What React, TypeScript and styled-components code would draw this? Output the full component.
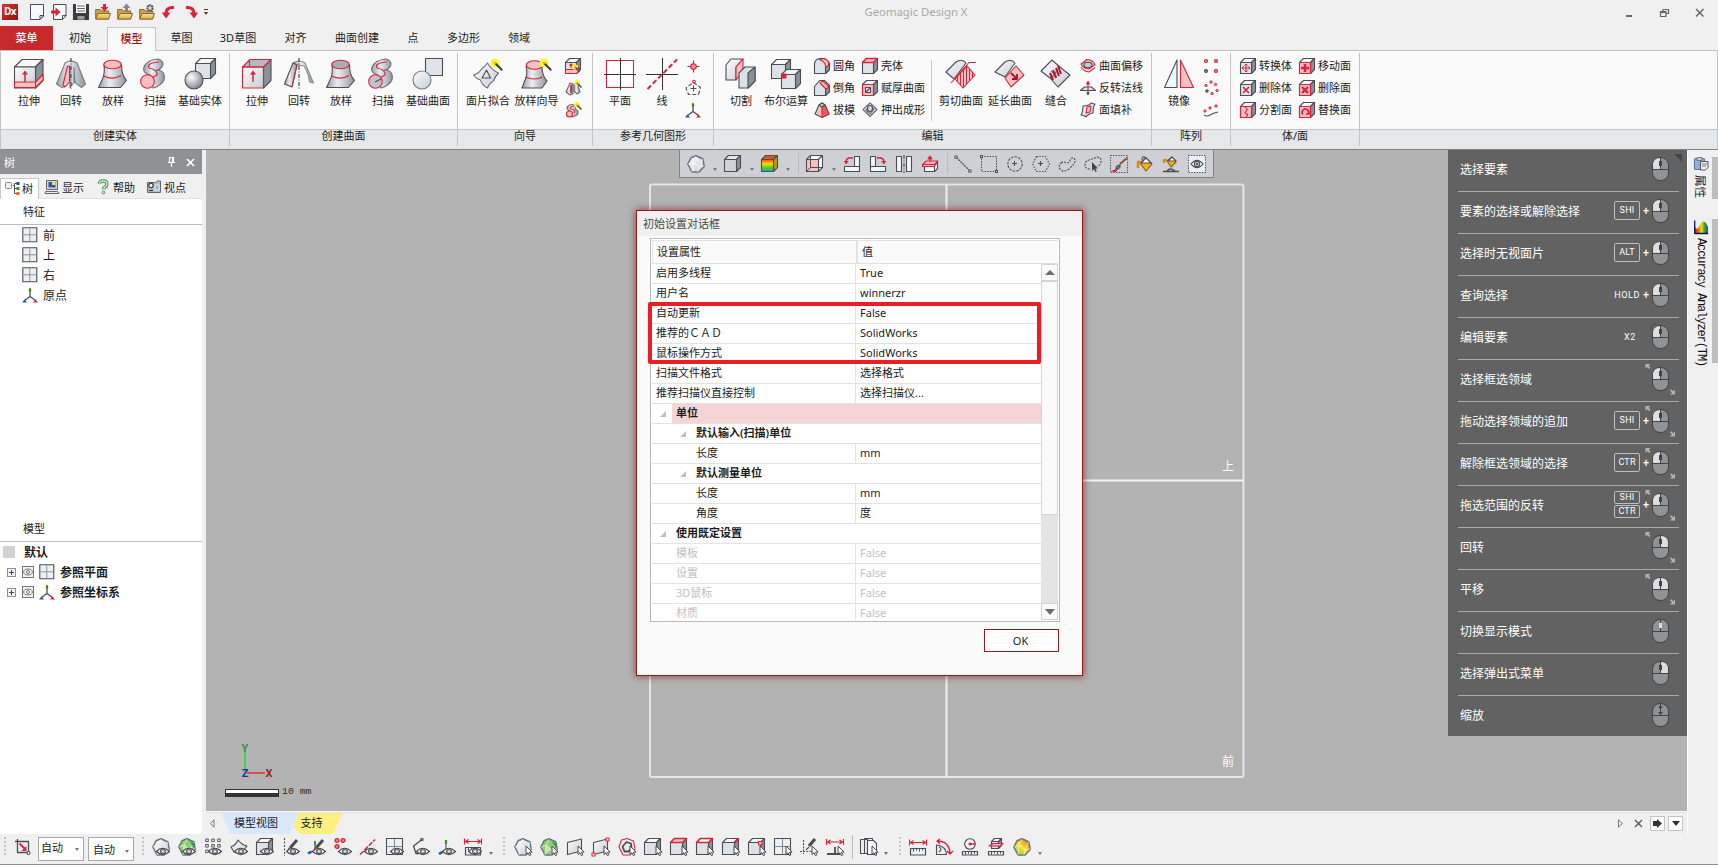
import React from 'react';
import styled, { createGlobalStyle, css } from 'styled-components';

const FONT = '"Noto Sans", "Noto Sans CJK SC", sans-serif';
const RED = '#d9223c';
const DARK = '#4b4e54';
const PINK = '#f8c0c0';

const Global = createGlobalStyle`
  * { box-sizing: border-box; }
  body { margin: 0; font-family: ${FONT}; font-size: 11px; color: #1c1c1c; background: #f0f0f0; overflow: hidden; }
  svg { display: block; flex: none; overflow: visible; }
`;

/* ---------- icons ---------- */

type IconProps = { size: number; children: React.ReactNode };
const Icon = ({ size, children }: IconProps) => (
  <svg width={size} height={size} viewBox={`0 0 ${size} ${size}`} fill="none" stroke={DARK} strokeWidth="1.1" strokeLinejoin="round">
    {children}
  </svg>
);

const HiddenDefs = styled.svg`position: absolute;`;
const Gradients = () => (
  <HiddenDefs width="0" height="0">
    <defs>
      <linearGradient id="metal" x1="0" x2="1"><stop offset="0" stopColor="#9a9da3" /><stop offset=".4" stopColor="#eceef2" /><stop offset="1" stopColor="#8f9399" /></linearGradient>
      <linearGradient id="pale" x1="0" y1="0" x2="1" y2="1"><stop offset="0" stopColor="#fdfdfe" /><stop offset="1" stopColor="#c6ccd4" /></linearGradient>
      <radialGradient id="ball" cx=".35" cy=".35" r=".7"><stop offset="0" stopColor="#fff" /><stop offset="1" stopColor="#7f858e" /></radialGradient>
      <linearGradient id="heat" x1="0" y1="0" x2="0" y2="1"><stop offset="0" stopColor="#f0421c" /><stop offset=".35" stopColor="#f8e000" /><stop offset=".7" stopColor="#58c81c" /><stop offset="1" stopColor="#18a8c8" /></linearGradient>
      <linearGradient id="heatAcross" x1="0" y1="1" x2="1" y2="0"><stop offset="0" stopColor="#8ed040" /><stop offset=".5" stopColor="#f4e028" /><stop offset="1" stopColor="#f05828" /></linearGradient>
      <linearGradient id="folder" x1="0" y1="0" x2="0" y2="1"><stop offset="0" stopColor="#f4e0a0" /><stop offset="1" stopColor="#d8b050" /></linearGradient>
      <linearGradient id="spectrum" x1="0" x2="1"><stop offset="0" stopColor="#c01818" /><stop offset=".3" stopColor="#f07810" /><stop offset=".5" stopColor="#f0d810" /><stop offset=".75" stopColor="#38a828" /><stop offset="1" stopColor="#1848b0" /></linearGradient>
      <pattern id="hatch" width="3" height="4" patternUnits="userSpaceOnUse"><rect width="3" height="4" fill="#f8c0c0" /><rect width="1" height="4" fill={RED} /></pattern>
    </defs>
  </HiddenDefs>
);

type BoxProps = { x?: number; y?: number; w: number; d: number; front?: string; top?: string; side?: string; stroke?: string };
/* Shaded block: square front of side w with a top and right face of depth d. */
const Block = ({ x = 0.5, y = 0.5, w, d, front = '#dde1e8', top = '#f6f8fa', side = '#8b9198', stroke = DARK }: BoxProps) => (
  <g stroke={stroke}>
    <path d={`M${x} ${y + d}l${d} ${-d}h${w}l${-d} ${d}z`} fill={top} />
    <path d={`M${x + w} ${y + d}l${d} ${-d}v${w}l${-d} ${d}z`} fill={side} />
    <path d={`M${x} ${y + d}h${w}v${w}h${-w}z`} fill={front} />
  </g>
);

const Wand = ({ x, y, r = 4.5 }: { x: number; y: number; r?: number }) => (
  <g stroke="none">
    <circle cx={x} cy={y} r={r} fill="#fbf23a" />
    <path d={`M${x} ${y}l${r * 1.6} ${r * 1.6}`} stroke="#3a3a3a" strokeWidth={r * 0.45} />
    <circle cx={x} cy={y} r={r * 0.3} fill="#e0b810" />
  </g>
);

const UpArrow = () => <><path d="M12 24v-8" stroke={RED} strokeWidth="1.500" /><path d="M9 16.500l3-4 3 4z" fill={RED} stroke="none" /></>;

const big: Record<string, React.ReactNode> = {
  extrude: <><Block x={1.5} y={1.5} w={21} d={7.5} front="url(#pale)" /><path d="M1.500 24h21l7.500-7.500v5.500l-7.500 7.500h-21z" fill={PINK} stroke={RED} /><path d="M22.500 24v5" stroke={RED} /><UpArrow /></>,
  extrudeS: <><path d="M1.500 9h21v21h-21z" fill="url(#pale)" stroke="none" /><path d="M22.500 9l7.500-7.500v21l-7.500 7.500z" fill="#8b9198" /><path d="M1.500 9l7.500-7.500h21l-7.500 7.500zM8.500 2v7" fill="#b5bac1" stroke={RED} /><path d="M1.500 9h21v21h-21z" stroke={RED} /><UpArrow /></>,
  revolve: <><path d="M1.500 26l8.500-21q6-4 12 0l8.500 21-4 3.500-6.500-5-1-15v15l-4 5v-20l-5 19-3 1z" fill="url(#metal)" stroke="#7b7f85" /><path d="M8 27l4.500-19h2v16l-4.500 5z" fill={PINK} stroke={RED} /><path d="M16 0v32" strokeDasharray="4 1.500 1 1.500" stroke="#303236" /></>,
  revolveS: <><path d="M10 5q6-4 12 0l8.500 20-4-1q-1-9-5.500-16l-6-1z" fill="url(#metal)" stroke="#8a8e94" /><path d="M1.500 26l8.500-21 4 2-5 22z" fill="url(#metal)" /><path d="M14 7l-5 22" stroke={RED} /><path d="M16 0v32" strokeDasharray="4 1.500 1 1.500" stroke="#303236" /></>,
  loft: <><path d="M7 6q1 10-1.500 15l-4 8.500h22l6-7q-5-5-5-16z" fill="url(#metal)" /><ellipse cx="15.500" cy="6.500" rx="8.700" ry="4.300" fill={PINK} stroke={RED} /><path d="M6.500 18q9 4.500 17.500-.5" stroke={RED} /></>,
  loftS: <><path d="M7 6q1 10-1.500 15l-4 8.500h22l6-7q-5-5-5-16z" fill="url(#metal)" /><ellipse cx="15.500" cy="6.500" rx="8.700" ry="4.300" fill="#a9aeb6" stroke={RED} /><path d="M6.500 18q9 4.500 17.500-.5" stroke={RED} /></>,
  sweep: <><path d="M11 17q-8-2-6-8 3-7 14-8 8 3 3 9-3 3-5 2 10 0 8 10-3 6-11 8z" fill="url(#metal)" stroke="#6a6e75" /><path d="M20 4q-13 1-10 6 9 2 8 7l-8 5" stroke={RED} /><circle cx="8.500" cy="23.500" r="6.800" fill={PINK} stroke={RED} /></>,
  sweepS: <><path d="M11 17q-8-2-6-8 3-7 14-8 8 3 3 9-3 3-5 2 10 0 8 10-3 6-11 8z" fill="url(#metal)" stroke="#6a6e75" /><path d="M20 4q-13 1-10 6 9 2 8 7l-8 5" stroke={RED} /><circle cx="8.500" cy="23.500" r="6.800" fill="#bfc4cb" stroke={RED} /><path d="M8 24l6-3" /></>,
  solids: <><Block x={11.5} y={0.5} w={15} d={5} /><circle cx="10" cy="22" r="9" fill="url(#ball)" /></>,
  surfaces: <><rect x="13.500" y=".500" width="17" height="17" fill="#dfe3ea" /><circle cx="10" cy="22" r="9" fill="url(#pale)" stroke="#777b82" /></>,
  meshFit: <><path d="M1.500 17q5-1 8-6 3-2 6-6 4 7 11 10-4 4-5 8-4 2-6 7-6-3-7-8-4-1-7-5z" fill="url(#pale)" stroke="#6a6e75" /><path d="M10 20l4.500-8 4 8z" /><Wand x={23} y={5} /></>,
  loftWiz: <><path d="M5 8q2 9-1 14l-3 8h20l5-7q-5-5-5-15z" fill="url(#metal)" /><ellipse cx="13.500" cy="7" rx="8.200" ry="4.300" fill={PINK} stroke={RED} /><path d="M4.500 19q9 4 17 0" stroke={RED} /><Wand x={23} y={5} /></>,
  plane: <><rect x="2.500" y="2.500" width="27" height="27" fill="#fff" stroke={RED} /><path d="M0 16.500h32M16.500 0v32" stroke="#303236" strokeWidth="1" /></>,
  line: <><path d="M0 16.500h32M16.500 0v32" stroke="#303236" strokeWidth="1" /><path d="M1.500 31L31 1.500" stroke={RED} strokeWidth="2" strokeDasharray="5 2.500" /></>,
  cut: <><path d="M1 7l5-6h12l-7 8v13H1z" fill="url(#pale)" /><path d="M11 9l7-8v12l-7 9z" fill={PINK} stroke={RED} /><path d="M14 15l6-6h10v14l-7 7h-9z" fill="#dde1e8" /><path d="M23 15l7-6v14l-7 7z" fill="#8b9198" /></>,
  boolean: <><Block x={1.500} y={1.500} w={14} d={5} /><Block x={11.500} y={11.500} w={14} d={5} /><rect x="11.500" y="15.500" width="5" height="5" fill={RED} stroke="none" /></>,
  trim: <><path d="M1 14L11 4q6-4 10 1l-12 16z" fill="url(#pale)" /><path d="M10 21q7-8 12-13l8 9-12 13z" fill="url(#hatch)" stroke={RED} /><path d="M6 25L24 4.500h7" stroke={RED} /></>,
  extend: <><path d="M1 14L11 4q6-4 10 1l-10 14z" fill="url(#pale)" /><path d="M11 20l11-12 8 9-13 12z" fill={PINK} stroke={RED} /><path d="M17 15l6 6m0-5v5h-5" stroke="#b3102a" strokeWidth="1.800" /></>,
  sew: <><path d="M1 13L12 2l9 8 9 7-12 12-8-9z" fill="url(#pale)" /><path d="M9 20q6-1 8-9M11 13l6 6" stroke="#777" /><path d="M10 15l3 7m0-10l3 8m0-10l3 8m-1-10l3 8" stroke="#b3102a" strokeWidth="2" /></>,
  mirror: <><path d="M14 2v27.500H1.500z" fill="#f0f7fb" /><path d="M17.500 2v27.500H30.500z" fill={PINK} stroke={RED} /></>,
};

const pinkBox = <><Block w={11} d={4} front={PINK} /><path d="M.500 4.500h11v11h-11z" stroke={RED} /></>;

const small: Record<string, React.ReactNode> = {
  boxWiz: <><Block w={11} d={4} /><path d="M.500 11.500h11l3-2v3l-3 3h-11z" fill={PINK} stroke={RED} /><path d="M6 10V6M4.500 7.500L6 6l1.500 1.500" stroke={RED} /><Wand x={10} y={9} r={2.800} /></>,
  revWiz: <><path d="M1 12l4-9 3 1v10l-3 1z" fill="url(#metal)" stroke="#6a6e75" /><path d="M9 4l3-1 3 9-3 2-3-3z" fill="url(#metal)" stroke="#6a6e75" /><path d="M6 13V5" stroke={RED} strokeWidth="1.700" /><Wand x={12} y={3} r={2.800} /></>,
  sweepWiz: <><path d="M5 9q-5-2-2-5t8 0l-1 3q5 2 2 6l-5 2z" fill="url(#metal)" stroke="#6a6e75" /><path d="M9 4q-5 1-3 3 5 1 3 4" stroke={RED} /><circle cx="4.500" cy="12" r="3" fill={PINK} stroke={RED} /><Wand x={12} y={3} r={2.800} /></>,
  point: <><path d="M8.500 2.500v12M2.500 8.500h12" stroke={DARK} /><circle cx="8.500" cy="8.500" r="2.800" fill="#f08a90" stroke={RED} /></>,
  polygon: <><path d="M8.500 2.500l7 5-2 7h-10L1 8z" strokeDasharray="4 2" /><path d="M5.500 8.500h6M8.500 5.500v6" strokeWidth="1" /><circle cx="9" cy="1.500" r="1.300" stroke={RED} /></>,
  axes: <><path d="M8 9.500V4M8 9.500l-5.500 4M8 9.500l5.500 4" strokeWidth="1.300" /><path d="M6.800 4.500V2L8 .500 9.200 2v2.500z" fill="#3a8a10" stroke="none" /><path d="M0 15.500l2.500-3 2.500 3z" fill="#1c58b8" stroke="none" /><path d="M16 15.500l-2.500-3-2.500 3z" fill={RED} stroke="none" /></>,
  fillet: <><path d="M.500 6.500q0-5 5-6h5l5 5v6l-4 4h-11z" fill="#dde1e8" /><path d="M11.500 9.500l4-4v6l-4 4z" fill="#8b9198" /><path d="M5.500 1.500q5-2 8 1 2 2 1 5l-3 2q1-5-6-8z" fill={PINK} stroke={RED} /></>,
  chamfer: <><path d="M.500 6.500l5-6h5l5 5v6l-4 4h-11z" fill="#dde1e8" /><path d="M11.500 9.500l4-4v6l-4 4z" fill="#8b9198" /><path d="M6 3l3-2 6 6-3 2z" fill={PINK} stroke={RED} /></>,
  draft: <><path d="M5 3l3-2 3 2 4 9-7 3.500L1 12z" fill={PINK} /><path d="M8 5l3-2 4 9-7 3.500z" fill="#d86068" stroke={RED} /><path d="M5 3l3-2 3 2-3 2z" fill="#ccd0d6" /></>,
  shell: <><Block w={11} d={4} /><path d="M.500 4.500l4-4h11l-4 4z" fill={PINK} stroke={RED} strokeWidth="1.400" /></>,
  thicken: <>{pinkBox}<rect x="3.500" y="7.500" width="5" height="5" fill="#dde1e8" /><path d="M4 12l4-4" /></>,
  emboss: <><path d="M8 1l7 6.500-7 7-7-7z" fill="url(#pale)" stroke="#6a6e75" /><path d="M8 4l4 3-4 5-4-4z" stroke="#6a6e75" /><ellipse cx="8" cy="6.500" rx="2.500" ry="3" fill="#d8dce2" /></>,
  offset: <><path d="M1 6l6-4.500q6 .5 8 5l-6 4.500q-5 0-8-5z" fill={PINK} stroke={RED} /><ellipse cx="8" cy="7" rx="4" ry="2.700" fill="#c8ccd2" /><path d="M1 9q3 4.500 8 5l6-4.500" stroke={RED} /></>,
  flip: <><path d="M.500 10.500l4-3.500h7l4 3.500z" fill="#dde1e8" /><path d="M8 14V9" /><path d="M6 12.500l2 3 2-3z" fill={DARK} stroke="none" /><path d="M8 9V2M6.500 4L8 1.500 9.500 4z" stroke={RED} fill={RED} /></>,
  fill: <><path d="M1 13q2-3 2-9 6 0 8-3 2 1 4 1-2 3-2 9-5 1-7 4-2-2-5-2z" fill="url(#pale)" /><path d="M6 11l1-6 4-1-1 6z" fill={PINK} stroke={RED} /></>,
  grid4: <>{[[3, 3], [13, 3], [13, 13]].map(([x, y]) => <circle key={`${x}${y}`} cx={x} cy={y} r="1.500" fill="#f08a90" stroke={RED} />)}<circle cx="3" cy="13" r="1.500" fill="#888" /></>,
  ring: <>{[[8, 2], [12.500, 4.500], [3, 5.500], [14, 10.500], [9, 13.500]].map(([x, y]) => <circle key={`${x}-${y}`} cx={x} cy={y} r="1.200" fill="#f08a90" stroke={RED} strokeWidth=".9" />)}<circle cx="4" cy="11" r="1.200" fill="#777" /></>,
  curvePts: <><path d="M1 13q3 2 6 0t8-3" />{[[2, 9], [7, 6], [13, 4]].map(([x, y]) => <circle key={x} cx={x} cy={y} r="1.200" fill="#f08a90" stroke={RED} strokeWidth=".9" />)}</>,
  transBody: <><Block w={11} d={4} /><path d="M6 6v8M2 10h8M4.500 7.500L6 6l1.500 1.500M4.500 12.500L6 14l1.500-1.500M3.500 8.500L2 10l1.500 1.500M8.500 8.500L10 10l-1.500 1.500" stroke={RED} strokeWidth="1" /></>,
  delBody: <><Block w={11} d={4} /><path d="M3 7l6 6m0-6l-6 6" stroke={RED} strokeWidth="1.500" /></>,
  splitFace: <>{pinkBox}<path d="M5 4.500l2.500 3-2.500 3 2.500 2-1 3" stroke={RED} /></>,
  moveFace: <>{pinkBox}<path d="M6 6v8M2 10h8" stroke={RED} strokeWidth="2.600" /></>,
  delFace: <>{pinkBox}<path d="M3 7l6 6m0-6l-6 6" stroke={RED} strokeWidth="2.400" /></>,
  replFace: <>{pinkBox}<path d="M4 12.500a3.200 3.200 0 1 1 5-.5m-2 0h3v-3" stroke={RED} strokeWidth="1.600" /></>,
  blank: <><path d="M1.500.500h13v11.500l-3.500 3.500h-9.500z" fill="#f7f9fa" strokeWidth="1" /><path d="M11 15.500v-4h3.500z" fill="#fff" strokeWidth="1" /></>,
  importDoc: <><path d="M2.500.500h12.500v11.500l-3.500 3.500h-9z" fill="#f7f9fa" strokeWidth="1" /><path d="M11.500 15.500v-4H15z" fill="#fff" strokeWidth="1" /><path d="M0 6.500h4.500V3.500L9.500 8l-5 4.500V9.500H0z" fill={RED} stroke="none" /></>,
  save: <><path d="M.500.500h15v15h-15z" fill="#3a3c40" stroke="#3a3c40" /><path d="M3 0h10v9H3z" fill="#fff" stroke="none" /><path d="M4 2h8M4 4.500h8M4 7h8" stroke="#555" strokeWidth=".9" /><path d="M4.500 12h7v3.500h-7z" fill="#999da3" stroke="none" /></>,
  undo: <><path d="M13 3.500q-8-1-8 7" stroke={RED} strokeWidth="3" /><path d="M.800 8.500h8.700L5 14.500z" fill={RED} stroke="none" /></>,
  redo: <><path d="M3 3.500q8-1 8 7" stroke={RED} strokeWidth="3" /><path d="M15.200 8.500H6.500l4.500 6z" fill={RED} stroke="none" /></>,
  frame: <><rect x=".8" y=".8" width="14" height="14" fill="#eeeff1" strokeWidth="1.100" /><path d="M7.800 1.400v13M1.400 7.800h13" stroke="#8a98a0" strokeWidth="1" /></>,
  tree: <><rect x=".500" y="1.500" width="6" height="6" rx="1" fill="#f1f1f1" stroke="#888" strokeWidth="1" /><path d="M8 4.500h2M12 2.500H9.500v10H12M9.500 7.500H12" stroke="#555" strokeWidth="1" /><rect x="11.500" y="1" width="3" height="3" fill="#1c4fa0" stroke="none" /><rect x="11.500" y="6" width="3" height="3" fill="#3a9a10" stroke="none" /><rect x="11.500" y="11" width="3" height="3" fill="#e06a10" stroke="none" /></>,
  monitor: <><rect x="2.500" y="1.500" width="11" height="9" fill="#d6d6d0" stroke="#666" strokeWidth="1" /><rect x="4.500" y="3" width="7" height="5.500" fill="#2a5aa0" stroke="none" /><path d="M8 3h3.500v3H8z" fill="#e8d890" stroke="none" /><path d="M1.500 12.500h12l1.500 2H1z" fill="#eee" strokeWidth="1" stroke="#666" /></>,
  question: <><path d="M4.500 5q0-3 3.700-3t3.700 3q0 2-2.200 3.200Q8.500 9 8.500 10.500" stroke="#4f9458" strokeWidth="3.400" /><path d="M4.500 5q0-3 3.700-3t3.700 3q0 2-2.200 3.200Q8.500 9 8.500 10.500" stroke="#cfe8cf" strokeWidth="1.400" /><circle cx="8.500" cy="13.500" r="1.400" fill="#cfe8cf" stroke="#4f9458" strokeWidth="1" /></>,
  camera: <><path d="M1.500 3.500h8L11.500 2h3v11.500h-13z" fill="#b9bcbf" stroke="#666" strokeWidth="1" /><circle cx="5" cy="6.500" r="2.200" fill="#eee" stroke="#333" /><rect x="9" y="6" width="4" height="5" fill="#8ab0d8" stroke="#fff" strokeWidth=".8" /><path d="M3 11.500h4" stroke="#333" /></>,
  props: <><rect x=".500" y="1.500" width="10" height="11" rx="1" fill="#8fb2dc" stroke="#5878a8" /><rect x="3" y=".500" width="5" height="3" fill="#c8ccd0" stroke="#666" strokeWidth=".8" /><path d="M6.500 4.500h7.500v6l-2.500 2.500h-5z" fill="#f0f0ea" stroke="#555" strokeWidth="1" /><path d="M8 7h5M8 9h4" stroke="#666" strokeWidth=".8" /></>,
  spectrum: <><path d="M1 13V7l2 2 2-2 2-4q3-3 5 0l2 4v6z" fill="url(#spectrum)" stroke="none" /><path d="M.700.500v13h13.500" stroke="#101850" strokeWidth="1.300" /></>,
};

const folderOf = (extra: React.ReactNode) => <><path d="M.700 15V5.500h4.500l1.500 1.500h7v8z" fill="#caa24a" stroke="#8a6a20" strokeWidth="1" /><path d="M.700 15l2.500-5.500h12.300L13.500 15z" fill="url(#folder)" stroke="#8a6a20" strokeWidth="1" />{extra}</>;
small.openDown = folderOf(<path d="M8 0h3v3h2.500l-4 4.500-4-4.500H8z" fill={RED} stroke="none" />);
small.openUp = folderOf(<path d="M8 7h3V4h2.500l-4-4.500-4 4.500H8z" fill="#83878c" stroke="none" />);
small.openGear = folderOf(<circle cx="11" cy="4" r="2.700" fill="#d8dce0" stroke="#55585e" strokeWidth="2" strokeDasharray="1.800 .500" />);

/* 18px tool icons */
const Gem = ({ fill = 'url(#pale)' }: { fill?: string }) => <><path d="M9 .8l7 3.200 1.200 7.500-5.200 5.500H5L.8 9 4 2.800z" fill={fill} stroke="#66757e" strokeWidth="1.500" /><path d="M9 1L6 7l6 5 5-1M6 7L1 9M6 7l-1 10M12 12l-1 5M12 12l4-8" stroke="#fff" strokeWidth=".7" opacity=".8" /></>;
const HeatGem = () => <><Gem fill="#8fcf6c" /><path d="M6 7l6 5-7 4z" fill="#fff" opacity=".45" stroke="none" /><path d="M12 4l4 1v5z" fill="#1ea060" stroke="none" /></>;
const Eye = () => <g><path d="M4.500 13.500q6-6.500 13 0-6.500 6-13 0z" fill="#f4f5f6" strokeWidth="1.200" /><circle cx="11" cy="13.300" r="2.600" fill="#9ca0a5" stroke="#4b4e54" strokeWidth="1" /><circle cx="11" cy="13.300" r=".9" fill="#fff" stroke="none" /></g>;
const Cursor = () => <path d="M12 8v8.500l2-1.800 1.400 2.900 1.400-.7-1.300-2.700 2.600-.2z" fill="#fff" stroke="#33363b" strokeWidth=".9" />;
const Ruler = ({ y = 11.5 }: { y?: number }) => <><rect x="1.500" y={y} width="15" height={17 - y} fill="#e9eff2" strokeWidth="1.200" /><path d={`M4.500 ${y}v3M7.500 ${y}v2M10.500 ${y}v3M13.500 ${y}v2`} strokeWidth="1" /></>;
const Cube18 = ({ children }: { children?: React.ReactNode }) => <><Block w={12} d={4} y={0.5} />{children}</>;
const Measure = ({ y }: { y: number }) => <path d={`M.500 ${y - 3}v6M17.500 ${y - 3}v6M1.500 ${y}h15M4.500 ${y - 2}l-3 2 3 2M13.500 ${y - 2}l3 2-3 2`} stroke={RED} strokeWidth="1.100" />;
const Pen = () => <><path d="M8 10L15 2" stroke="#4b4e54" strokeWidth="3" /><path d="M6 13l.5-3 2 1.500z" fill={RED} stroke={RED} strokeWidth=".8" /></>;
const Window18 = () => <><rect x=".500" y=".500" width="16" height="16" fill="#eef0f2" /><path d="M8.500 1v15.500M.500 8.500h16" stroke="#7c8a94" strokeWidth="1" /></>;

const tool: Record<string, React.ReactNode> = {
  gem: <Gem />,
  cube: <Block x={0.5} y={0.5} w={12} d={4} front="#d0d2d4" top="#e4e6e8" />,
  heatCube: <Block x={0.5} y={0.5} w={12} d={4} front="url(#heat)" top="#e8501c" side="#b89a18" />,
  wireCube: <><Block x={0.5} y={0.5} w={12} d={4} front="#f8c0c0" top="#fff" side="#fff" /><path d="M4.500 .500v12h12M4.500 12.500l-4 4" strokeWidth="1" /></>,
  rotL: <><path d="M11.500 1.500h5v15h-15v-5h10z" fill="#f0f7fb" /><path d="M11.500 11.500h5" /><path d="M10 3Q3 2 3 7" stroke={RED} strokeWidth="1.500" /><path d="M.8 6h5L3 9.500z" fill={RED} stroke="none" /></>,
  rotR: <><path d="M6.500 1.500h-5v15h15v-5h-10z" fill="#f0f7fb" /><path d="M6.500 11.500h-5" /><path d="M8 3q7-1 7 4" stroke={RED} strokeWidth="1.500" /><path d="M17.200 6h-5L15 9.500z" fill={RED} stroke="none" /></>,
  flipH: <><path d="M1.500 1.500h5v15h-5zM11.500 1.500h5v15h-5z" fill="#f0f7fb" /><path d="M9 0v18" strokeDasharray="4 1.500 1 1.500" /></>,
  normalTo: <><path d="M3.500 10.500h10v6h-10z" fill="#f0f7fb" /><path d="M13.500 10.500l3-3v6l-3 3z" fill="#fff" /><path d="M1.500 9.500l4-3.500h11.500l-3.500 3.500v2h-12z" fill={PINK} stroke={RED} /><path d="M1.500 9.500h12" stroke={RED} /><path d="M9 7V2M7 4l2-3 2 3z" stroke={RED} fill={RED} /></>,
  selLine: <><path d="M2.500 2.500l13 13" strokeWidth="1.300" strokeDasharray="2 .8" /><circle cx="2" cy="2" r="1.300" fill="#fff" /><circle cx="16" cy="16" r="1.300" fill="#fff" /></>,
  selRect: <><rect x="1.500" y="1.500" width="15" height="15" strokeDasharray="1.500 1.200" /><rect x=".500" y=".500" width="2" height="2" fill="#fff" /><rect x="15.500" y="15.500" width="2" height="2" fill="#fff" /></>,
  selCircle: <><circle cx="9" cy="9" r="7.200" strokeDasharray="2.500 1.200" /><path d="M6 8.500h5M8.500 6v5" /></>,
  selHex: <><path d="M4.500 1.500h9L17.500 9l-4 7.500h-9L.5 9z" strokeDasharray="1.500 1.300" /><path d="M6 8.500h5M8.500 6v5" /></>,
  selFree: <path d="M3 8q3-2 6 0 3 0 3-3 2-3 4-2 2 3 0 6-2 2-5 5-6 4-9 0-2-3 1-6z" strokeDasharray="2 1.200" />,
  selLasso: <><path d="M6 14q-5 0-5-4t4-5 8-3q5 1 4 5t-4 4" strokeDasharray="2 1.200" /><path d="M8 7v9l2-2 1.500 3 1.300-.6-1.300-3h2.500z" fill="#404246" stroke="none" /></>,
  selBrush: <><rect x=".500" y=".500" width="17" height="17" strokeDasharray="1.300 1.300" /><path d="M10 9l7-6" stroke="#8a5a38" strokeWidth="2.200" /><path d="M6 14q0-4 4-4 1 3-4 5z" fill="#777" /><path d="M2 16l5-1.500-1.500 2z" fill={RED} stroke={RED} /></>,
  bucket: <><path d="M4 8l6-5 6 6-6 7z" fill="#f0b020" stroke="#8a6010" /><path d="M5 8l5-5 5 5z" fill="#fff" /><path d="M6 5q0-5 4-2" /><path d="M2 13V7h3" stroke="#d88a10" strokeWidth="2.600" /></>,
  bucketLine: <><path d="M5 6l5-4 4 5-5 5z" fill="#f0b020" stroke="#8a6010" /><path d="M6 6l4-4 4 4z" fill="#fff" /><path d="M2 8V5h3" stroke="#d88a10" strokeWidth="2.200" /><path d="M1 16.500h16M5 16q3-4 8 0" strokeWidth="1.300" /></>,
  eyeBox: <><rect x=".500" y=".500" width="17" height="17" fill="#e8f2f8" strokeDasharray="1.300 1.300" /><path d="M3 9q6-7.500 12 0-6 7.500-12 0z" strokeWidth="1.200" fill="#fff" /><circle cx="9" cy="9" r="2.600" strokeWidth="1.200" /><circle cx="9" cy="9" r=".8" fill={DARK} /></>,
  crop: <><path d="M3.500 1v13.500H14M1 3.500h13.500V14" strokeWidth="1.300" /><circle cx="14.500" cy="15" r="1.500" fill="#fff" /><path d="M5.500 5.500l6 6" stroke={RED} strokeWidth="1.800" /><path d="M12.500 8v5h-5z" fill={RED} stroke="none" /></>,
  vGem: <><Gem /><Eye /></>,
  vHeat: <><HeatGem /><Eye /></>,
  vPoints: <>{[2, 7.500, 13].map(y => [3, 9, 15].map(x => <rect key={`${x}-${y}`} x={x - 1.300} y={y - 1} width="2.600" height="2.600" strokeWidth=".9" />))}<Eye /></>,
  vSheet: <><path d="M1 9q5-2 7-7 4 5 9 6l-6 8-7-2z" fill="url(#pale)" /><Eye /></>,
  vBody: <><Cube18 /><Eye /></>,
  vSketch: <><path d="M2.500 0v18" strokeDasharray="2 1.500" /><Pen /><Eye /></>,
  vSketch3: <><path d="M7 12V6M7 12l-5 3" stroke="#55585e" /><path d="M7 3v4" stroke="#3a9a10" strokeWidth="2" /><path d="M0 15.500l3.500-2" stroke="#1c58b8" strokeWidth="2.500" /><Pen /><Eye /></>,
  vPts: <>{[[3, 2.500], [9, 2.500], [3, 8.500]].map(([x, y]) => <circle key={`${x}${y}`} cx={x} cy={y} r="1.900" fill="#f08a90" stroke={RED} strokeWidth="1.400" />)}<Eye /></>,
  vLine: <><path d="M0 16.500L15 1.500" stroke={RED} strokeWidth="1.500" strokeDasharray="5 1.200" /><Eye /></>,
  vPlane: <><Window18 /><Eye /></>,
  vPoly: <><path d="M10 1.500L1.500 8 4 15.500h3" strokeWidth="1.300" /><circle cx="10" cy="1.500" r="1.200" /><Eye /></>,
  vAxes: <><path d="M8 12V4M8 12l-6 4" stroke="#55585e" /><path d="M8 2v4" stroke="#3a9a10" strokeWidth="2.200" /><path d="M1 16l3-2" stroke="#1c58b8" strokeWidth="2.500" /><Eye /></>,
  vMeasure: <><Measure y={3.500} /><Ruler y={9.500} /><Eye /></>,
  sGem: <><Gem /><Cursor /></>,
  sHeat: <><HeatGem /><Cursor /></>,
  sFace: <><path d="M1.500 4.500l14-3.500v12l-14 3.500z" fill="url(#pale)" /><Cursor /></>,
  sEdge: <><path d="M1.500 4.500l14-3.500v12l-14 3.500z" fill="url(#pale)" /><rect x="14" y="0" width="3" height="3" stroke={RED} fill="#fff" /><rect x="0" y="15" width="3" height="3" stroke={RED} fill="#fff" /><Cursor /></>,
  sRegion: <><path d="M9 .500l6.500 2.500 1.500 8-5 6H5L1 9l2.500-7z" stroke={RED} /><path d="M8.500 4l4.500 1.500.500 5-3 3H6.500l-2-5z" fill="#e4e7ea" strokeWidth="1.800" /><Cursor /></>,
  sBody: <><Cube18 /><Cursor /></>,
  sTop: <><Cube18><path d="M.500 4.500l4-4h12l-4 4z" fill={PINK} stroke={RED} strokeWidth="1.400" /></Cube18><Cursor /></>,
  sLoop: <><Cube18><path d="M.500 4.500l4-4h12l-4 4z" fill="#fff" stroke={RED} strokeWidth="1.600" /></Cube18><Cursor /></>,
  sEdge1: <><Cube18><path d="M12.500 4.500l4-4" stroke={RED} strokeWidth="1.900" /></Cube18><Cursor /></>,
  sVertex: <><Cube18><rect x="10.500" y="3.500" width="3.500" height="3.500" fill={PINK} stroke={RED} /></Cube18><Cursor /></>,
  sPlane: <><Window18 /><Cursor /></>,
  sSketch: <><path d="M3.500 2v14M0 13.500h14" strokeDasharray="2 1.200" /><path d="M9 8l6-7" strokeWidth="3.200" /><path d="M6 12l3-3" /><Cursor /></>,
  sDim: <><Measure y={4} /><path d="M1 16h13M9 9v7" strokeWidth="1.800" /><Cursor /></>,
  copy: <><path d="M.500 1.500h7v14h-7zM4.500 .500h8v15h-8z" fill="#eef0f4" /><path d="M7.500 2.500h6l3 3v11h-9z" fill="#fff" /><Cursor /></>,
  mLength: <><Measure y={4.500} /><Ruler y={10.500} /></>,
  mAngle: <><path d="M1.500 7v9.500h10Q11 8 1.500 7z" fill="#e9eff2" /><path d="M4 14q4-3 0-5" /><path d="M2 3q12 0 13 12M5 1L2 3l3 3M12 13l3 3 3-3" stroke={RED} strokeWidth="1.300" /></>,
  mRadius: <><circle cx="9" cy="6" r="5.300" fill="#f1f3f5" /><path d="M9 6h5" stroke={RED} strokeWidth="1.500" /><circle cx="9" cy="6" r="1" fill={RED} stroke={RED} /><Ruler y={13.5} /></>,
  mSection: <><Block x={4.5} y={0.5} w={7} d={3} /><path d="M2 8l4-2.500h10L13 8z" fill={PINK} stroke={RED} /><Ruler y={13.5} /></>,
  mHeat: <Gem fill="url(#heatAcross)" />,
};

/* ---------- layout ---------- */

const Window = styled.div`
  width: 1718px; height: 865px; display: flex; flex-direction: column; background: #f0f0f0;
  border-bottom: 1px solid #8c8f92; position: relative; overflow: hidden;
`;
const TitleBar = styled.div`
  height: 26px; flex: none; display: flex; align-items: center; padding: 0 13px 3px 2px;
`;
const AppBadge = styled.div`
  width: 16px; height: 16px; margin-right: 11px; background: linear-gradient(135deg, #e4322c, #8c1212);
  color: #fff; font: 700 10px/15px "Open Sans", sans-serif; text-align: center; letter-spacing: -0.5px;
`;
const QuickTools = styled.div`display: flex; gap: 6px; align-items: center; width: 182px;`;
const Caret = styled.i<{ $c?: string; $w?: number }>`
  display: block; width: 0; height: 0; flex: none; border: ${p => (p.$w ?? 5) / 2}px solid transparent; border-bottom: 0;
  border-top: ${p => (p.$w ?? 5) * 0.6}px solid ${p => p.$c ?? '#777'};
`;
const QuickMore = styled.div`padding-top: 2px; border-top: 1px solid #7a2a2a; margin-left: -1px;`;
const AppTitle = styled.div`flex: 1; text-align: center; color: #a9a9a9; font-size: 11.3px; line-height: 22px; padding-right: 3px;`;
const WindowControls = styled.div`display: flex; gap: 25.5px; color: #666; padding-top: 2px;`;

const TabStrip = styled.div`height: 25px; flex: none; display: flex; position: relative; z-index: 1; margin-bottom: -1px; border-bottom: 1px solid #c2c3c5;`;
const RibbonTab = styled.div<{ $w: number; $kind?: 'menu' | 'active' }>`
  width: ${p => p.$w}px; height: 24px; text-align: center; line-height: 24px;
  ${p => p.$kind === 'menu' && css`background: #c62a2c; color: #fff; font-weight: 500;`}
  ${p => p.$kind === 'active' && css`
    background: #fafafa; color: #a01818; border: 1px solid #c2c3c5; border-bottom: 0; margin-top: 1px; line-height: 22px; font-weight: 500;
  `}
`;
const Ribbon = styled.div`
  height: 100px; flex: none; display: flex; background: linear-gradient(#fafafa 78px, #c2c3c5 78px, #c2c3c5 79px, #e6e7e9 79px);
  border: 1px solid #c2c3c5; border-bottom: 1px solid #808386;
`;
const Group = styled.div<{ $w: number }>`
  width: ${p => p.$w}px; height: 93px; margin-top: 2px; border-right: 1px solid #c2c3c5; display: flex; flex-direction: column;
`;
const GroupBody = styled.div<{ $pad: number }>`height: 77px; flex: none; display: flex; padding: 5px 0 0 ${p => p.$pad}px;`;
const GroupName = styled.div`text-align: center; line-height: 12px;`;
const BigButton = styled.div<{ $w: number }>`
  width: ${p => p.$w}px; display: flex; flex-direction: column; align-items: center; gap: 2px; white-space: nowrap; line-height: 17px;
`;
const SmallColumn = styled.div<{ $w: number; $ml?: number }>`
  width: ${p => p.$w}px; margin-left: ${p => p.$ml ?? 0}px; display: flex; flex-direction: column; gap: 6px;
`;
const SmallButton = styled.div`
  height: 16px; display: flex; align-items: center; gap: 3px; white-space: nowrap;
  span { margin-top: -2px; }
`;
const BodyDivider = styled.div<{ $ml?: number }>`width: 1px; height: 61px; margin: 2px 0 0 ${p => p.$ml ?? 0}px; background: #c8c9cb;`;

const Workspace = styled.div`height: 684px; flex: none; display: flex;`;
const SidePanel = styled.aside`width: 202px; height: 684px; background: #fff; display: flex; flex-direction: column;`;
const PanelHeader = styled.div`
  height: 24px; flex: none; background: #8f9295; color: #fff; display: flex; align-items: center; padding: 0 7px 0 4px; gap: 10px;
  span { flex: 1; }
`;
const PanelTabs = styled.div`height: 25px; flex: none; background: #f0f0f0; display: flex; border-bottom: 1px solid #e2e2e2;`;
const PanelTab = styled.div<{ $w: number; $on?: boolean }>`
  width: ${p => p.$w}px; display: flex; align-items: center; gap: 2px; padding: 1px 0 0 5px; white-space: nowrap; height: 25px;
  span { margin-top: -1px; }
  ${p => p.$on && css`background: #fff; border: 1px solid #c8c8c8; border-bottom: 0; margin-top: 4px; height: 21px; padding: 0 0 1px 4px;`}
`;
const TreeSection = styled.div<{ $h: number }>`height: ${p => p.$h}px;`;
const SectionTitle = styled.div`height: 26px; line-height: 26px; padding-left: 23px; border-bottom: 1px solid #bbbcbe;`;
const TreeRow = styled.div<{ $pad: number; $bold?: boolean }>`
  height: 20px; display: flex; align-items: center; gap: 5px; padding-left: ${p => p.$pad}px; font-size: 12px;
  font-weight: ${p => (p.$bold ? 600 : 400)};
`;
const Expander = styled.span`
  width: 9px; height: 9px; margin-right: 1px; border: 1px solid #8a8f98; background: linear-gradient(90deg, transparent 2px, #2a4ca0 2px, #2a4ca0 3px, transparent 3px) 1px 1px / 5px 5px no-repeat, linear-gradient(transparent 2px, #2a4ca0 2px, #2a4ca0 3px, transparent 3px) 1px 1px / 5px 5px no-repeat, #f2f2f2;
`;
const GreyBox = styled.span`width: 12px; height: 12px; background: #d2d2d2; margin-right: 4px;`;

const Center = styled.main`width: 1482px; margin-left: 4px; display: flex; flex-direction: column; border-right: 1px solid #fff; flex: none;`;
const Viewport = styled.div`height: 662px; flex: none; background: #b3b3b3; position: relative; border-bottom: 1px solid #f8f8f8; overflow: hidden;`;
const Scene = styled.svg`position: absolute; inset: 0;`;
const FloatBar = styled.div`
  position: absolute; left: 473px; top: 0; width: 535px; height: 28px; background: #ced0d6; border: 1px solid #81858a; border-top: 0;
  display: flex; align-items: center;
`;
const Slot = styled.div<{ $w: number }>`width: ${p => p.$w}px; flex: none; display: flex; justify-content: center; align-items: center;`;
const SlotCaret = styled(Slot)`padding-top: 12px;`;
const Rule = styled.div<{ $h: number }>`width: 1px; height: ${p => p.$h}px; background: #b9bbc0; flex: none;`;

const Help = styled.div`
  position: absolute; left: 1242px; top: 0; width: 239px; height: 586px; background: #626262; padding: 0 8px 0 10px; color: #fff;
`;
const HelpCorner = styled.i`position: absolute; right: 5px; top: 4px; border: 4px solid #454545; border-left-color: transparent; border-bottom-color: transparent;`;
const HelpRow = styled.div`
  height: 42px; display: flex; align-items: center; padding: 0 10px 4px 2px; font-size: 12px; border-bottom: 1px solid #a9a9a9; position: relative;
  &:nth-child(14) { border-bottom: 0; }
  span { flex: 1; }
`;
const KeyStack = styled.div`display: flex; flex-direction: column; gap: 1px;`;
const Key = styled.div<{ $small?: boolean }>`
  width: 26px; height: ${p => (p.$small ? 13 : 19)}px; line-height: ${p => (p.$small ? 11 : 17)}px; border: 1px solid #c0c0c0; border-radius: 2px;
  font-family: Roboto, sans-serif; font-size: 9px; letter-spacing: 0.2px; text-align: center;
`;
const Held = styled.div<{ $mr?: number }>`font-family: Roboto, sans-serif; font-size: 9px; letter-spacing: 0.6px; margin-right: ${p => p.$mr ?? 0}px;`;
const Plus = styled.div`width: 12px; text-align: center; font: 500 11px/12px Roboto, sans-serif;`;

const Dialog = styled.div`
  position: absolute; left: 636px; top: 210px; width: 447px; height: 466px; background: #fafafa; border: 1px solid #99191d;
  box-shadow: 0 0 7px 1px rgba(110, 20, 20, 0.6); z-index: 5; display: flex; flex-direction: column;
`;
const DialogTitle = styled.div`height: 25px; flex: none; background: #f0f0f0; color: #4a4a4a; line-height: 26px; padding-left: 6px;`;
const Grid = styled.div`
  width: 410px; height: 384px; margin: 2px 0 0 13px; border: 1px solid #b9babc; background: #fff; padding: 1px; display: flex; flex-direction: column;
`;
const GridHead = styled.div`
  height: 24px; flex: none; display: flex; background: #fafafa; border: 1px solid #e2e2e2; border-right: 0; line-height: 21px;
  div:first-child { width: 205px; border-right: 2px solid #e2e2e2; padding-left: 4px; }
  div:last-child { padding-left: 4px; }
`;
const GridMain = styled.div`flex: 1; display: flex; overflow: hidden;`;
const GridRows = styled.div`width: 389px; height: 356px; overflow: hidden;`;
const GridRow = styled.div<{ $off?: boolean; $head?: boolean }>`
  height: 20px; display: flex; border-bottom: 1px solid #e3e3e3; line-height: 18px; color: ${p => (p.$off ? '#c2c2c2' : '#1c1c1c')};
  font-weight: ${p => (p.$head ? 600 : 400)};
`;
const GridName = styled.div<{ $indent: number; $head?: boolean; $sel?: boolean }>`
  display: flex; padding-left: ${p => 4 + p.$indent * 20}px; white-space: nowrap;
  ${p => (p.$head ? css`flex: 1; padding-left: ${p.$indent * 20 - 20}px;` : css`width: 204px; border-right: 1px solid #e3e3e3;`)}
  i { width: 20px; flex: none; display: flex; justify-content: center; align-items: center; padding: 1px 0 0 2px; }
  b { font-weight: inherit; flex: 1; padding-left: ${p => (p.$head ? 4 : 0)}px; background: ${p => (p.$sel ? '#f5d4d6' : 'transparent')}; }
`;
const GridValue = styled.div`padding-left: 4px; font-size: 11px;`;
const ScrollTrack = styled.div`width: 17px; height: 356px; background: #e4e4e4; display: flex; flex-direction: column;`;
const ScrollPart = styled.div<{ $h: number }>`height: ${p => p.$h}px; border: 1px solid #d4d4d4; background: #fafafa; display: flex; justify-content: center; align-items: center;`;
const ScrollGap = styled.div`flex: 1;`;
const UpCaret = styled.i`border: 5px solid transparent; border-top: 0; border-bottom-color: #6c6c6c;`;
const OkButton = styled.button`
  align-self: flex-end; width: 75px; height: 23px; margin: 7px 23px 0 0; border: 1px solid #99191d; background: #fff; font: 11px/20px ${FONT}; color: #1c1c1c; padding: 0 2px 0 0;
`;
const Highlight = styled.div`position: absolute; left: 648px; top: 302px; width: 393px; height: 62px; border: 4px solid #ee1c24; border-radius: 2px; z-index: 6;`;

const ViewTabs = styled.div`height: 22px; flex: none; display: flex; align-items: center; border-top: 1px solid #e2e2e2; padding: 0 4px 0 3px;`;
const ViewTab = styled.div<{ $w: number; $ml: number; $pr: number; $bg: string; $clip: string }>`
  width: ${p => p.$w}px; margin-left: ${p => p.$ml}px; padding-right: ${p => p.$pr}px; height: 21px; line-height: 19px; background: ${p => p.$bg}; clip-path: polygon(${p => p.$clip}); text-align: center;
`;
const Spring = styled.div`flex: 1;`;
const CloseSlot = styled.div`margin: 0 4px 0 9px;`;
const MiniBox = styled.div`width: 15px; height: 15px; border: 1px solid #c4c4c4; background: #fff; margin-left: 3px; display: flex; align-items: center; justify-content: center;`;

const RightBar = styled.aside`width: 30px; display: flex; background: #f0f0f0; flex: none;`;
const SideTabs = styled.div`width: 24px; display: flex; flex-direction: column; padding: 7px 0 0 6px; flex: none;`;
const VText = styled.div<{ $h: number; $mono?: boolean }>`
  writing-mode: vertical-rl; text-orientation: sideways; height: ${p => p.$h}px; width: 13px; line-height: 13px; white-space: nowrap; flex: none;
  padding-top: 3px; font-size: ${p => (p.$mono ? 12 : 11.5)}px; ${p => p.$mono && css`font-family: "Liberation Mono", monospace; letter-spacing: -1.1px; color: #111;`}
`;
const Edge = styled.div`
  width: 6px; height: 206px; margin-top: 7px; display: flex; flex-direction: column; gap: 20px;
  &::before { content: ''; height: 42px; background: #bdbdbd; }
  &::after { content: ''; flex: 1; background: #bdbdbd; }
`;

const BottomBar = styled.div`height: 30px; flex: none; display: flex; align-items: center; padding-bottom: 4px;`;
const Grip = styled.div<{ $ml: number; $mr: number }>`
  width: 2px; height: 20px; margin: 0 ${p => p.$mr}px 0 ${p => p.$ml}px; flex: none; background: repeating-linear-gradient(#c6c6c6 0 2px, transparent 2px 4px);
`;
const Combo = styled.div<{ $low?: boolean }>`
  width: 46px; height: 24px; margin: 4px 4px 0 0; border: 1px solid #a9a9a9; background: #fff; display: flex; justify-content: space-between; align-items: center;
  padding: ${p => (p.$low ? 1 : 0)}px 4px ${p => (p.$low ? 2 : 5)}px ${p => (p.$low ? 4 : 2)}px; flex: none;
  i { margin-top: 5px; }
`;

/* ---------- parts ---------- */

const BigItem = ({ n, t, w }: { n: string; t: string; w: number }) => (
  <BigButton $w={w}><Icon size={32}>{big[n]}</Icon>{t}</BigButton>
);
const SmallItem = ({ n, t }: { n: string; t?: string }) => (
  <SmallButton><Icon size={16}>{small[n]}</Icon>{t && <span>{t}</span>}</SmallButton>
);
const Tool = ({ n, w }: { n: string; w: number }) => <Slot $w={w}><Icon size={18}>{tool[n]}</Icon></Slot>;
const RibbonGroup = ({ w, pad, name, children }: { w: number; pad: number; name: string; children: React.ReactNode }) => (
  <Group $w={w}><GroupBody $pad={pad}>{children}</GroupBody><GroupName>{name}</GroupName></Group>
);
const EyeSmall = () => (
  <svg width="12" height="12" viewBox="0 0 12 12" fill="#f6f6f6" stroke="#777" strokeWidth="1">
    <rect x=".5" y=".5" width="11" height="11" /><ellipse cx="6" cy="6" rx="4.300" ry="3" /><circle cx="6" cy="6" r="1.500" />
  </svg>
);

type Btn = 'l' | 'r' | 'both' | 'mid' | 'zoom';
const Mouse = ({ b, drag, dbl }: { b: Btn; drag?: boolean; dbl?: boolean }) => (
  <svg width="17" height="24" viewBox="0 0 17 24" fill="none" stroke="#414346" strokeWidth="1">
    <rect x=".5" y=".5" width="16" height="23" rx="7.500" fill="#8f9396" />
    {(b === 'l' || b === 'both') && <path d="M8.500 1C3 1 1 4 1 8v4h7.500z" fill="#dedede" stroke="none" />}
    {(b === 'r' || b === 'both') && <path d="M8.500 1C14 1 16 4 16 8v4H8.500z" fill="#dedede" stroke="none" />}
    <path d="M1 12.500h15M8.500 1v11" />
    {b === 'zoom'
      ? <path d="M6 5l2.500-3L11 5zM6 9l2.500 3L11 9z" fill="#414346" stroke="none" />
      : <rect x="7" y="4" width="3" height="5" fill={b === 'mid' ? '#dedede' : '#414346'} stroke="none" />}
    {drag && <path d="M-6.500-3h5l-1.800 1.800L-1.500.8l-1.200 1.200L-4.800 0l-1.700 2zM23 27.500v-5l-1.800 1.800-2-2L18 23.500l2 2-2 2z" fill="#b4b4b4" stroke="none" />}
    {dbl && <path d="M-1.500 5Q-1-1 4-1.500" stroke="#4b4b4b" />}
  </svg>
);

type HelpItem = { t: string; b: Btn; keys?: string[]; held?: string; drag?: boolean; dbl?: boolean };
const helpItems: HelpItem[] = [
  { t: '选择要素', b: 'l' },
  { t: '要素的选择或解除选择', b: 'l', keys: ['SHI'] },
  { t: '选择时无视面片', b: 'l', keys: ['ALT'] },
  { t: '查询选择', b: 'l', held: 'HOLD' },
  { t: '编辑要素', b: 'l', held: 'X2', dbl: true },
  { t: '选择框选领域', b: 'l', drag: true },
  { t: '拖动选择领域的追加', b: 'l', keys: ['SHI'], drag: true },
  { t: '解除框选领域的选择', b: 'l', keys: ['CTR'], drag: true },
  { t: '拖选范围的反转', b: 'l', keys: ['SHI', 'CTR'], drag: true },
  { t: '回转', b: 'r', drag: true },
  { t: '平移', b: 'both', drag: true },
  { t: '切换显示模式', b: 'mid' },
  { t: '选择弹出式菜单', b: 'r' },
  { t: '缩放', b: 'zoom' },
];

type Row = { n: string; v?: string; i?: number; head?: boolean; off?: boolean; sel?: boolean };
const rows: Row[] = [
  { n: '启用多线程', v: 'True' },
  { n: '用户名', v: 'winnerzr' },
  { n: '自动更新', v: 'False' },
  { n: '推荐的ＣＡＤ', v: 'SolidWorks' },
  { n: '鼠标操作方式', v: 'SolidWorks' },
  { n: '扫描文件格式', v: '选择格式' },
  { n: '推荐扫描仪直接控制', v: '选择扫描仪...' },
  { n: '单位', i: 1, head: true, sel: true },
  { n: '默认输入(扫描)单位', i: 2, head: true },
  { n: '长度', v: 'mm', i: 2 },
  { n: '默认测量单位', i: 2, head: true },
  { n: '长度', v: 'mm', i: 2 },
  { n: '角度', v: '度', i: 2 },
  { n: '使用既定设置', i: 1, head: true },
  { n: '模板', v: 'False', i: 1, off: true },
  { n: '设置', v: 'False', i: 1, off: true },
  { n: '3D鼠标', v: 'False', i: 1, off: true },
  { n: '材质', v: 'False', i: 1, off: true },
];

const ribbonTabs: [string, number, ('menu' | 'active')?][] = [
  ['菜单', 53, 'menu'], ['初始', 54], ['模型', 49, 'active'], ['草图', 51], ['3D草图', 62], ['对齐', 53],
  ['曲面创建', 70], ['点', 42], ['多边形', 59], ['领域', 52],
];

const SettingsDialog = () => (
  <Dialog>
    <DialogTitle>初始设置对话框</DialogTitle>
    <Grid>
      <GridHead><div>设置属性</div><div>值</div></GridHead>
      <GridMain>
        <GridRows>
          {rows.map((r, k) => (
            <GridRow key={k} $off={r.off} $head={r.head}>
              <GridName $indent={r.i ?? 0} $head={r.head} $sel={r.sel}>
                {r.head && <i><svg width="6" height="6"><path d="M6 0v6H0z" fill="#bdbdbd" /></svg></i>}
                <b>{r.n}</b>
              </GridName>
              {!r.head && <GridValue>{r.v}</GridValue>}
            </GridRow>
          ))}
        </GridRows>
        <ScrollTrack>
          <ScrollPart $h={17}><UpCaret /></ScrollPart>
          <ScrollPart $h={234} />
          <ScrollGap />
          <ScrollPart $h={17}><Caret $w={10} $c="#6c6c6c" /></ScrollPart>
        </ScrollTrack>
      </GridMain>
    </Grid>
    <OkButton>OK</OkButton>
  </Dialog>
);

const FloatingTools = () => (
  <FloatBar>
    <Tool n="gem" w={31} /><SlotCaret $w={8}><Caret /></SlotCaret>
    <Tool n="cube" w={28} /><SlotCaret $w={9}><Caret /></SlotCaret>
    <Tool n="heatCube" w={28} /><SlotCaret $w={8}><Caret /></SlotCaret>
    <Slot $w={6} /><Rule $h={21} />
    <Tool n="wireCube" w={32} /><SlotCaret $w={5}><Caret /></SlotCaret>
    <Slot $w={1} />
    <Tool n="rotL" w={29} /><Tool n="rotR" w={24} /><Tool n="flipH" w={27} /><Tool n="normalTo" w={26} />
    <Slot $w={4} /><Rule $h={21} /><Slot $w={2} />
    {['selLine', 'selRect', 'selCircle', 'selHex', 'selFree', 'selLasso', 'selBrush', 'bucket', 'bucketLine', 'eyeBox'].map(n => <Tool key={n} n={n} w={26} />)}
  </FloatBar>
);

export default function App() {
  return (
    <Window>
      <Global />
      <Gradients />
      <TitleBar>
        <AppBadge>Dx</AppBadge>
        <QuickTools>
          {['blank', 'importDoc', 'save', 'openDown', 'openUp', 'openGear', 'undo', 'redo'].map(n => <Icon key={n} size={16}>{small[n]}</Icon>)}
          <QuickMore><Caret $c="#7a2a2a" /></QuickMore>
        </QuickTools>
        <AppTitle>Geomagic Design X</AppTitle>
        <WindowControls>
          <svg width="10" height="10" stroke="#666" strokeWidth="2"><path d="M2 8h6" /></svg>
          <svg width="10" height="10" stroke="#666" fill="none"><path d="M3 3.500V1.500h5.500v4H6.500M.5 3.500H6v5H.5zM.5 4.500H6" strokeWidth="1.200" /></svg>
          <svg width="10" height="10" stroke="#666" strokeWidth="1.500"><path d="M1 1l7.500 7.500M8.500 1L1 8.500" /></svg>
        </WindowControls>
      </TitleBar>
      <TabStrip>
        {ribbonTabs.map(([t, w, k]) => <RibbonTab key={t} $w={w} $kind={k}>{t}</RibbonTab>)}
      </TabStrip>
      <Ribbon>
        <RibbonGroup w={229} pad={7} name="创建实体">
          <BigItem n="extrude" t="拉伸" w={42} /><BigItem n="revolve" t="回转" w={42} /><BigItem n="loft" t="放样" w={42} />
          <BigItem n="sweep" t="扫描" w={42} /><BigItem n="solids" t="基础实体" w={48} />
        </RibbonGroup>
        <RibbonGroup w={228} pad={6} name="创建曲面">
          <BigItem n="extrudeS" t="拉伸" w={42} /><BigItem n="revolveS" t="回转" w={42} /><BigItem n="loftS" t="放样" w={42} />
          <BigItem n="sweepS" t="扫描" w={42} /><BigItem n="surfaces" t="基础曲面" w={48} />
        </RibbonGroup>
        <RibbonGroup w={135} pad={6} name="向导">
          <BigItem n="meshFit" t="面片拟合" w={48} /><BigItem n="loftWiz" t="放样向导" w={49} />
          <SmallColumn $w={16} $ml={4}><SmallItem n="boxWiz" /><SmallItem n="revWiz" /><SmallItem n="sweepWiz" /></SmallColumn>
        </RibbonGroup>
        <RibbonGroup w={121} pad={6} name="参考几何图形">
          <BigItem n="plane" t="平面" w={42} /><BigItem n="line" t="线" w={42} />
          <SmallColumn $w={16} $ml={2}><SmallItem n="point" /><SmallItem n="polygon" /><SmallItem n="axes" /></SmallColumn>
        </RibbonGroup>
        <RibbonGroup w={438} pad={6} name="编辑">
          <BigItem n="cut" t="切割" w={42} /><BigItem n="boolean" t="布尔运算" w={48} />
          <SmallColumn $w={48} $ml={4}><SmallItem n="fillet" t="圆角" /><SmallItem n="chamfer" t="倒角" /><SmallItem n="draft" t="拔模" /></SmallColumn>
          <SmallColumn $w={64}><SmallItem n="shell" t="壳体" /><SmallItem n="thicken" t="赋厚曲面" /><SmallItem n="emboss" t="押出成形" /></SmallColumn>
          <BodyDivider $ml={5} />
          <BigItem n="trim" t="剪切曲面" w={58} /><BigItem n="extend" t="延长曲面" w={40} /><BigItem n="sew" t="缝合" w={52} />
          <SmallColumn $w={64} $ml={-2}><SmallItem n="offset" t="曲面偏移" /><SmallItem n="flip" t="反转法线" /><SmallItem n="fill" t="面填补" /></SmallColumn>
        </RibbonGroup>
        <RibbonGroup w={79} pad={6} name="阵列">
          <BigItem n="mirror" t="镜像" w={42} />
          <SmallColumn $w={16} $ml={3}><SmallItem n="grid4" /><SmallItem n="ring" /><SmallItem n="curvePts" /></SmallColumn>
        </RibbonGroup>
        <RibbonGroup w={129} pad={9} name="体/面">
          <SmallColumn $w={59}><SmallItem n="transBody" t="转换体" /><SmallItem n="delBody" t="删除体" /><SmallItem n="splitFace" t="分割面" /></SmallColumn>
          <SmallColumn $w={55}><SmallItem n="moveFace" t="移动面" /><SmallItem n="delFace" t="删除面" /><SmallItem n="replFace" t="替换面" /></SmallColumn>
        </RibbonGroup>
      </Ribbon>

      <Workspace>
        <SidePanel>
          <PanelHeader>
            <span>树</span>
            <svg width="9" height="10" stroke="#fff" fill="none" strokeWidth="1.200"><path d="M2.500 5.500v-5h4v5M5.500.5v5M1 5.500h7M4.500 5.500V10" /></svg>
            <svg width="9" height="9" stroke="#fff" strokeWidth="1.700"><path d="M1 1l7 7M8 1L1 8" /></svg>
          </PanelHeader>
          <PanelTabs>
            <PanelTab $w={39} $on><Icon size={15}>{small.tree}</Icon><span>树</span></PanelTab>
            <PanelTab $w={51}><Icon size={16}>{small.monitor}</Icon><span>显示</span></PanelTab>
            <PanelTab $w={51}><Icon size={16}>{small.question}</Icon><span>帮助</span></PanelTab>
            <PanelTab $w={60}><Icon size={16}>{small.camera}</Icon><span>视点</span></PanelTab>
          </PanelTabs>
          <TreeSection $h={317}>
            <SectionTitle>特征</SectionTitle>
            <TreeRow $pad={22}><Icon size={16}>{small.frame}</Icon>前</TreeRow>
            <TreeRow $pad={22}><Icon size={16}>{small.frame}</Icon>上</TreeRow>
            <TreeRow $pad={22}><Icon size={16}>{small.frame}</Icon>右</TreeRow>
            <TreeRow $pad={22}><Icon size={16}>{small.axes}</Icon>原点</TreeRow>
          </TreeSection>
          <TreeSection $h={292}>
            <SectionTitle>模型</SectionTitle>
            <TreeRow $pad={3} $bold><GreyBox />默认</TreeRow>
            <TreeRow $pad={7} $bold><Expander /><EyeSmall /><Icon size={16}>{small.frame}</Icon>参照平面</TreeRow>
            <TreeRow $pad={7} $bold><Expander /><EyeSmall /><Icon size={16}>{small.axes}</Icon>参照坐标系</TreeRow>
          </TreeSection>
        </SidePanel>

        <Center>
          <Viewport>
            <Scene width="1481" height="662" fill="none">
              <rect x="444" y="34.500" width="593.500" height="592.500" rx="2" stroke="#e6e6e6" strokeWidth="2" />
              <path d="M740.500 34v593M444 330.500h593" stroke="#f2f2f2" strokeWidth="2" />
              <g fill="#fff" fontSize="12" fontFamily={FONT}><text x="1016" y="321">上</text><text x="1016" y="616">前</text></g>
              <path d="M39 622V602" stroke="#48d048" strokeWidth="2" />
              <path d="M41 623h18" stroke="#dc4c4c" strokeWidth="2" />
              <g fontFamily="Roboto, sans-serif" fontSize="11" fontWeight="700" textAnchor="middle">
                <text x="39" y="602" fill="#3c8c3c">Y</text><text x="39" y="627" fill="#2c2c9c">Z</text><text x="63" y="627" fill="#9c2626">X</text>
              </g>
              <rect x="19.500" y="639.500" width="53" height="7" fill="#fff" stroke="#333" />
              <rect x="19" y="643" width="54" height="4" fill="#333" />
              <text x="76" y="644" fill="#2c2c2c" fontFamily="Liberation Mono, monospace" fontSize="9.800">10 mm</text>
            </Scene>
            <FloatingTools />
            <Help>
              {helpItems.map(h => (
                <HelpRow key={h.t}>
                  <span>{h.t}</span>
                  {h.keys && <KeyStack>{h.keys.map(k => <Key key={k} $small={h.keys!.length > 1}>{k}</Key>)}</KeyStack>}
                  {h.held && <Held $mr={h.dbl ? 16 : 0}>{h.held}</Held>}
                  {(h.keys || (h.held && !h.dbl)) && <Plus>+</Plus>}
                  <Mouse b={h.b} drag={h.drag} dbl={h.dbl} />
                </HelpRow>
              ))}
              <HelpCorner />
            </Help>
          </Viewport>
          <ViewTabs>
            <svg width="8" height="9" stroke="#777" fill="none"><path d="M5 .8v7.400L1.500 4.500z" /></svg>
            <ViewTab $w={78} $ml={4} $pr={8} $bg="#d9e8fd" $clip="0 0, 100% 0, 87% 100%, 12% 100%">模型视图</ViewTab>
            <ViewTab $w={50} $ml={-6} $pr={13} $bg="#fdf081" $clip="12% 0, 100% 0, 80% 100%, 14% 100%, 0 65%">支持</ViewTab>
            <Spring />
            <svg width="8" height="9" stroke="#777" fill="none"><path d="M1.500.8v7.400L5.500 4.500z" /></svg>
            <CloseSlot><svg width="9" height="9" stroke="#555" strokeWidth="1.300"><path d="M1 1l7 7M8 1L1 8" /></svg></CloseSlot>
            <MiniBox><svg width="9" height="9"><path d="M0 2h4V0l5 4.500L4 9V7H0z" fill="#333" /></svg></MiniBox>
            <MiniBox><Caret $w={9} $c="#333" /></MiniBox>
          </ViewTabs>
        </Center>

        <RightBar>
          <SideTabs>
            <Icon size={15}>{small.props}</Icon>
            <VText $h={48}>属性</VText>
            <Icon size={15}>{small.spectrum}</Icon>
            <VText $h={133} $mono>Accuracy Analyzer(TM)</VText>
          </SideTabs>
          <Edge />
        </RightBar>
      </Workspace>

      <BottomBar>
        <Grip $ml={4} $mr={8} />
        <Tool n="crop" w={18} /><Slot $w={6} />
        <Combo>自动<Caret /></Combo><Combo $low>自动<Caret /></Combo>
        <Grip $ml={4} $mr={4} />
        {['vGem', 'vHeat', 'vPoints', 'vSheet', 'vBody', 'vSketch', 'vSketch3', 'vPts', 'vLine', 'vPlane', 'vPoly', 'vAxes', 'vMeasure'].map(n => <Tool key={n} n={n} w={26} />)}
        <SlotCaret $w={10}><Caret /></SlotCaret>
        <Grip $ml={7} $mr={5} />
        {['sGem', 'sHeat', 'sFace', 'sEdge', 'sRegion', 'sBody', 'sTop', 'sLoop', 'sEdge1', 'sVertex', 'sPlane', 'sSketch', 'sDim'].map(n => <Tool key={n} n={n} w={26} />)}
        <Slot $w={4} /><Rule $h={24} /><Slot $w={4} />
        <Tool n="copy" w={24} /><SlotCaret $w={10}><Caret /></SlotCaret>
        <Grip $ml={8} $mr={4} />
        {['mLength', 'mAngle', 'mRadius', 'mSection', 'mHeat'].map(n => <Tool key={n} n={n} w={26} />)}
        <SlotCaret $w={10}><Caret /></SlotCaret>
      </BottomBar>

      <SettingsDialog />
      <Highlight />
    </Window>
  );
}
